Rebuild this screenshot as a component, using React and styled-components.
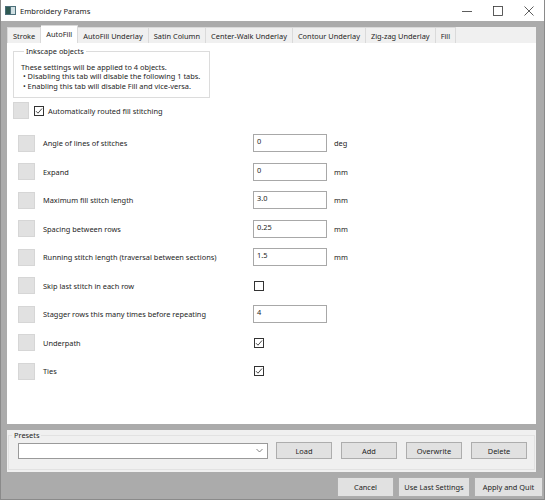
import React from "react";
import styled, { createGlobalStyle } from "styled-components";

const GlobalStyle = createGlobalStyle`
	html, body {
		margin: 0;
		padding: 0;
	}
	body {
		font-family: "Noto Sans", "Open Sans", sans-serif;
		font-size: 7.4px;
		color: #1e1e1e;
	}
	* {
		box-sizing: border-box;
	}
`;

const Window = styled.div`
	width: 545px;
	height: 500px;
	display: flex;
	flex-direction: column;
	background-color: #ababab;
	border-left: 1px solid #8a8a8a;
	border-right: 1px solid #8a8a8a;
	border-bottom: 1px solid #8a8a8a;
	overflow: hidden;
`;

const TitleBar = styled.div`
	height: 21px;
	flex-shrink: 0;
	display: flex;
	align-items: center;
	background-color: #fff;
	padding-left: 4px;
`;

const Title = styled.span`
	margin-left: 4px;
	font-size: 7.6px;
	color: #1a1a1a;
`;

const Controls = styled.div`
	margin-left: auto;
	display: flex;
	height: 100%;
`;

const ControlButton = styled.div`
	width: 31px;
	height: 100%;
	display: flex;
	align-items: center;
	justify-content: center;
`;

const Body = styled.div`
	flex: 1;
	display: flex;
	flex-direction: column;
	padding: 6px 0 3px 0;
`;

const Notebook = styled.div`
	margin: 0 8px 0 6px;
	display: flex;
	flex-direction: column;
`;

const TabStrip = styled.div`
	height: 16px;
	display: flex;
	align-items: flex-end;
	background-color: #f0f0f0;
`;

const Tab = styled.div`
	height: ${(p) => (p.$active ? "18px" : "16px")};
	padding: 0 5px;
	padding-bottom: ${(p) => (p.$active ? "2px" : "0")};
	display: flex;
	align-items: center;
	white-space: nowrap;
	background-color: ${(p) => (p.$active ? "#fff" : "#f0f0f0")};
	border-right: 1px solid #dadada;
	border-left: ${(p) => (p.$first ? "1px solid #dadada" : "none")};
	border-top: 1px solid #dadada;
`;

const Page = styled.div`
	height: 381px;
	background-color: #fff;
	padding: 4px 5px 0 6px;
`;

const GroupBox = styled.fieldset`
	margin: 0;
	width: ${(p) => p.$width || "auto"};
	height: ${(p) => p.$height || "auto"};
	padding: ${(p) => p.$padding || "0"};
	border: 1px solid ${(p) => p.$line || "#dcdcdc"};
	min-inline-size: auto;
`;

const Legend = styled.legend`
	padding: 0 2px;
	margin-left: 3px;
	line-height: 9px;
`;

const InfoLine = styled.div`
	line-height: 9.4px;
	white-space: nowrap;
`;

const AutoRow = styled.div`
	display: flex;
	align-items: center;
	margin-top: 4px;
	height: 17px;
`;

const ToggleSquare = styled.div`
	width: ${(p) => p.$w || 17}px;
	height: 17px;
	flex-shrink: 0;
	background-color: #e1e1e1;
	border: 1px solid #d6d6d6;
`;

const CheckBox = styled.div`
	width: 10px;
	height: 10px;
	flex-shrink: 0;
	margin-left: ${(p) => p.$ml || 0}px;
	border: 1px solid #333;
	background-color: #fff;
	display: flex;
	align-items: center;
	justify-content: center;
`;

const AutoLabel = styled.span`
	margin-left: 4px;
`;

const ParamList = styled.div`
	margin-top: 10px;
	padding-left: 5px;
	display: flex;
	flex-direction: column;
`;

const ParamRow = styled.div`
	height: 28.5px;
	display: flex;
	align-items: center;
`;

const ParamLabel = styled.span`
	width: 210px;
	margin-left: 8px;
	white-space: nowrap;
`;

const TextField = styled.div`
	width: 74px;
	height: 18px;
	border: 1px solid #a8a8a8;
	background-color: #fff;
	padding: 2px 3px;
	line-height: 9px;
`;

const Unit = styled.span`
	margin-left: 7px;
`;

const PresetsPanel = styled.div`
	margin: 6px 8px 0 6px;
	height: 42px;
	background-color: #f0f0f0;
	padding: 1px 1px 2px 1px;
`;

const PresetsRow = styled.div`
	display: flex;
	align-items: center;
	padding: 2px 0 0 9px;
`;

const Combo = styled.div`
	width: 250px;
	height: 16px;
	border: 1px solid #9a9a9a;
	background-color: #fff;
	display: flex;
	align-items: center;
	justify-content: flex-end;
	padding-right: 4px;
	margin-right: 8px;
`;

const Button = styled.div`
	width: ${(p) => p.$w}px;
	height: ${(p) => p.$h || 17}px;
	background-color: #e1e1e1;
	border: 1px solid #adadad;
	display: flex;
	align-items: center;
	justify-content: center;
	white-space: nowrap;
	margin-right: ${(p) => p.$mr || 0}px;
`;

const ButtonBar = styled.div`
	display: flex;
	justify-content: flex-end;
	gap: 4px;
	margin-top: 5px;
	padding-right: 1px;
`;

const Check = () => (
	<svg width="8" height="8" viewBox="0 0 8 8">
		<path d="M1 4.2 L3 6.2 L7 1.5" fill="none" stroke="#333" strokeWidth="0.9" />
	</svg>
);

const AppIcon = () => (
	<svg width="11" height="9" viewBox="0 0 11 9">
		<rect x="0" y="0" width="11" height="9" fill="#4c6f7a" />
		<rect x="6" y="1" width="4" height="7" fill="#cfdfe2" />
		<rect x="1" y="1" width="4" height="7" fill="#2f5a52" />
	</svg>
);

const tabs = [
	"Stroke",
	"AutoFill",
	"AutoFill Underlay",
	"Satin Column",
	"Center-Walk Underlay",
	"Contour Underlay",
	"Zig-zag Underlay",
	"Fill",
];

const params = [
	{ label: "Angle of lines of stitches", value: "0", unit: "deg" },
	{ label: "Expand", value: "0", unit: "mm" },
	{ label: "Maximum fill stitch length", value: "3.0", unit: "mm" },
	{ label: "Spacing between rows", value: "0.25", unit: "mm" },
	{ label: "Running stitch length (traversal between sections)", value: "1.5", unit: "mm" },
	{ label: "Skip last stitch in each row", check: false },
	{ label: "Stagger rows this many times before repeating", value: "4" },
	{ label: "Underpath", check: true },
	{ label: "Ties", check: true },
];

export default function App() {
	return (
		<Window>
			<GlobalStyle />
			<TitleBar>
				<AppIcon />
				<Title>Embroidery Params</Title>
				<Controls>
					<ControlButton>
						<svg width="10" height="10" viewBox="0 0 10 10">
							<path d="M0 5.5 H10" stroke="#333" strokeWidth="0.8" />
						</svg>
					</ControlButton>
					<ControlButton>
						<svg width="10" height="10" viewBox="0 0 10 10">
							<rect x="0.5" y="0.5" width="9" height="9" fill="none" stroke="#333" strokeWidth="0.8" />
						</svg>
					</ControlButton>
					<ControlButton>
						<svg width="10" height="10" viewBox="0 0 10 10">
							<path d="M0.5 0.5 L9.5 9.5 M9.5 0.5 L0.5 9.5" stroke="#333" strokeWidth="0.8" />
						</svg>
					</ControlButton>
				</Controls>
			</TitleBar>
			<Body>
				<Notebook>
					<TabStrip>
						{tabs.map((t, i) => (
							<Tab key={t} $active={t === "AutoFill"} $first={i === 0}>
								{t}
							</Tab>
						))}
					</TabStrip>
					<Page>
						<GroupBox $width="197px" $padding="7px 7px 6px 7px">
							<Legend>Inkscape objects</Legend>
							<InfoLine>These settings will be applied to 4 objects.</InfoLine>
							<InfoLine>&nbsp;• Disabling this tab will disable the following 1 tabs.</InfoLine>
							<InfoLine>&nbsp;• Enabling this tab will disable Fill and vice-versa.</InfoLine>
						</GroupBox>
						<AutoRow>
							<ToggleSquare $w={16} />
							<CheckBox $ml={5}>
								<Check />
							</CheckBox>
							<AutoLabel>Automatically routed fill stitching</AutoLabel>
						</AutoRow>
						<ParamList>
							{params.map((p) => (
								<ParamRow key={p.label}>
									<ToggleSquare />
									<ParamLabel>{p.label}</ParamLabel>
									{p.value !== undefined ? (
										<TextField>{p.value}</TextField>
									) : (
										<CheckBox $ml={1}>{p.check && <Check />}</CheckBox>
									)}
									{p.unit && <Unit>{p.unit}</Unit>}
								</ParamRow>
							))}
						</ParamList>
					</Page>
				</Notebook>
				<PresetsPanel>
					<GroupBox $padding="0 0 4px 0" $height="100%" $line="#e2e2e2">
						<Legend>Presets</Legend>
						<PresetsRow>
							<Combo>
								<svg width="7" height="5" viewBox="0 0 7 5">
									<path d="M0.5 1 L3.5 4 L6.5 1" fill="none" stroke="#666" strokeWidth="0.8" />
								</svg>
							</Combo>
							<Button $w={56} $mr={9}>Load</Button>
							<Button $w={56} $mr={9}>Add</Button>
							<Button $w={56} $mr={9}>Overwrite</Button>
							<Button $w={56}>Delete</Button>
						</PresetsRow>
					</GroupBox>
				</PresetsPanel>
				<ButtonBar>
					<Button $w={57} $h={20}>Cancel</Button>
					<Button $w={72} $h={20}>Use Last Settings</Button>
					<Button $w={69} $h={20}>Apply and Quit</Button>
				</ButtonBar>
			</Body>
		</Window>
	);
}
